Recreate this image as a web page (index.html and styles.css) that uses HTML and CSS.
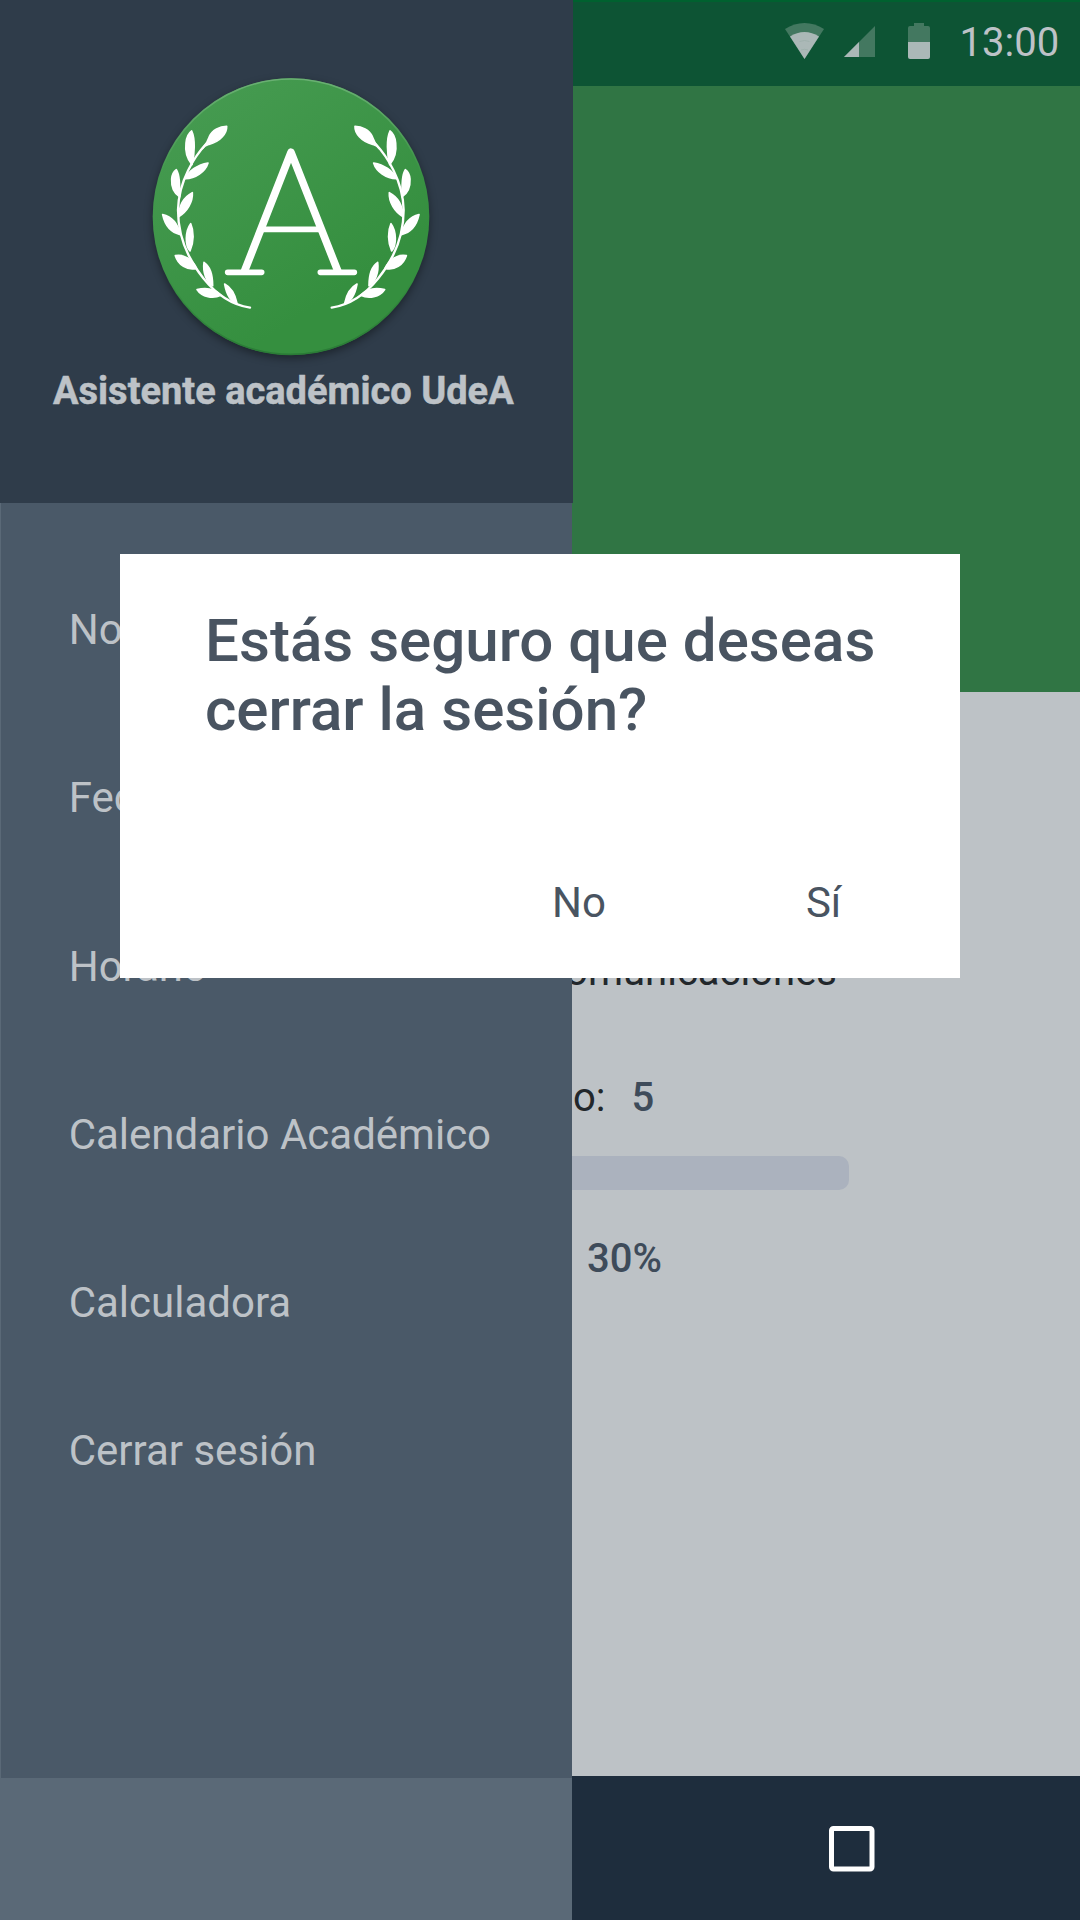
FILE: index.html
```html
<!DOCTYPE html>
<html lang="es">
<head>
<meta charset="utf-8">
<title>Asistente académico UdeA</title>
<link rel="stylesheet" href="styles.css">
</head>
<body>
<div class="screen">
  <aside class="drawer">
    <header class="drawer-head">
      <svg class="logo" viewBox="0 0 906 906">
        <defs>
          <linearGradient id="disc" x1="0.2" y1="0" x2="0.7" y2="0.75">
            <stop offset="0" stop-color="#469b51"/>
            <stop offset="1" stop-color="#358f3f"/>
          </linearGradient>
          <linearGradient id="rim" x1="0" y1="0" x2="0" y2="1">
            <stop offset="0" stop-color="#6ab073"/>
            <stop offset="0.35" stop-color="#6ab073" stop-opacity="0"/>
            <stop offset="0.7" stop-color="#2a7b36" stop-opacity="0"/>
            <stop offset="1" stop-color="#2a7b36"/>
          </linearGradient>
          <g id="branch" fill="#fff" stroke="#fff" stroke-width="5" stroke-linejoin="round">
            <path d="M200 220C165 258 116 330 114 420C114 510 150 575 190 625C230 675 275 705 330 713" fill="none" stroke-width="7" stroke-linecap="round"/>
            <path d="M260 169C261 189 242 214 207 223C198 226 191 230 187 236C200 222 204 212 208 200C217 179 240 170 260 169Z"/>
            <path d="M155 183C166 206 164 252 156 284C138 262 136 235 138 219C140 198 148 188 155 183Z"/>
            <path d="M204 279C196 305 166 326 136 326C146 302 173 284 204 279Z"/>
            <path d="M109 299C119 314 119 344 119 380C99 368 94 348 95 327C96 312 102 304 109 299Z"/>
            <path d="M157 368C159 396 141 425 116 440C117 407 132 381 157 368Z"/>
            <path d="M68 434C98 441 114 464 121 494C94 488 75 466 68 434Z"/>
            <path d="M152 461C162 483 162 516 150 543C135 527 135 484 152 461Z"/>
            <path d="M106 557C131 552 157 568 170 595C141 602 115 585 106 557Z"/>
            <path d="M192 577C212 590 218 619 218 647C199 636 188 607 192 577Z"/>
            <path d="M171 659C197 652 224 657 243 676C219 687 186 682 171 659Z"/>
            <path d="M254 642C275 653 286 676 291 700C270 693 259 670 254 642Z"/>
          </g>
        </defs>
        <circle class="logo-disc" cx="453" cy="440" r="415" fill="url(#disc)"/>
        <circle cx="453" cy="440" r="413" fill="none" stroke="url(#rim)" stroke-width="5"/>
        <use href="#branch"/>
        <use href="#branch" transform="translate(905 0) scale(-1 1)"/>
        <g fill="none" stroke="#fff" stroke-linecap="round" stroke-linejoin="round">
          <path d="M314 602L453 247L593 602" stroke-width="23"/>
          <path d="M366 478H540" stroke-width="17"/>
          <path d="M263 607H365M541 607H643" stroke-width="17"/>
        </g>
      </svg>
      <h1 class="app-name">Asistente académico UdeA</h1>
    </header>
    <nav class="menu">
      <a class="menu-item">Notas</a>
      <a class="menu-item">Fechas</a>
      <a class="menu-item">Horario</a>
      <a class="menu-item">Calendario Académico</a>
      <a class="menu-item">Calculadora</a>
      <a class="menu-item menu-item-last">Cerrar sesión</a>
    </nav>
    <div class="drawer-foot"></div>
  </aside>

  <main class="page">
    <div class="status">
      <svg class="wifi" width="39" height="36" viewBox="0 0 39 36">
        <path d="M0 6C12 -2 27 -2 39 6L19.500 36Z" fill="#437860"/>
        <path d="M5 13.500C14 7.500 25 7.500 34 13.500L19.500 36Z" fill="#abb8b7"/>
        <path d="M14.500 18.500Q19.500 16.500 24.500 18.500M16 27Q19.500 25.500 23 27" fill="none" stroke="#9cafa9" stroke-width="0.800"/>
      </svg>
      <svg class="signal" width="31" height="31" viewBox="0 0 31 31">
        <path d="M31 0V31H0Z" fill="#437860"/>
        <path d="M15 16V31H0Z" fill="#abb8b7"/>
      </svg>
      <svg class="battery" width="22" height="36" viewBox="0 0 22 36">
        <path d="M6 0H16V3H20Q22 3 22 5V19H0V5Q0 3 2 3H6Z" fill="#437860"/>
        <path d="M0 19H22V34Q22 36 20 36H2Q0 36 0 34Z" fill="#abb8b7"/>
      </svg>
      <span class="clock">13:00</span>
    </div>
    <div class="banner"></div>
    <section class="course">
      <div class="course-name">comunicaciones</div>
      <div class="grade"><span>o:</span><b class="value">5</b></div>
      <div class="track"></div>
      <b class="value percent">30%</b>
    </section>
    <div class="navbar">
      <svg width="46" height="46" viewBox="0 0 46 46"><rect x="2.500" y="2.500" width="40.500" height="40.500" rx="2" fill="none" stroke="#fff" stroke-width="5"/></svg>
    </div>
  </main>

  <div class="dialog">
    <h2 class="question">Estás seguro que deseas cerrar la sesión?</h2>
    <div class="actions">
      <span class="action">No</span>
      <span class="action">Sí</span>
    </div>
  </div>
</div>
</body>
</html>
```
FILE: styles.css
```css
* { box-sizing: border-box; }
body {
  margin: 0;
  font-family: Roboto, sans-serif;
  font-size: 42px;
}
.screen {
  position: relative;
  display: grid;
  grid-template-columns: 572px 508px;
  width: 1080px;
  height: 1920px;
  overflow: hidden;
}

/* Drawer */
.drawer {
  display: flex;
  flex-direction: column;
  height: 1920px;
  background: #5a6977;
  z-index: 1;
}
.drawer-head {
  width: 573px;
  height: 503px;
  flex: none;
  background: #2f3c4a;
  padding-top: 70px;
}
.logo {
  display: block;
  width: 302px;
  height: 302px;
  margin-left: 140px;
  overflow: visible;
}
.logo-disc { filter: drop-shadow(0 10px 12px rgba(0, 0, 0, .4)); }
.app-name {
  margin: -4px 0 0 53px;
  font-size: 38px;
  line-height: 46px;
  font-weight: 700;
  -webkit-text-stroke: .5px #bdc2c7;
  color: #bdc2c7;
  white-space: nowrap;
}
.menu {
  flex: none;
  height: 1275px;
  margin-left: 1px;
  padding: 43px 0 0 67.700px;
  background: #4a5968;
}
.menu-item {
  display: block;
  height: 168.300px;
  line-height: 168px;
  color: #bdc2c7;
}
.menu-item-last { margin-top: -20px; }
.drawer-foot { flex: 1; }

/* Page behind */
.page {
  display: flex;
  flex-direction: column;
  background: #bdc2c6;
  overflow: hidden;
}
.status {
  height: 86px;
  flex: none;
  display: flex;
  align-items: flex-start;
  background: #0d5434;
  border-top: 2px solid #00612f;
  padding: 21px 0 0 213px;
}
.signal { margin: 3px 0 0 20px; }
.battery { margin-left: 33px; }
.clock {
  margin: -3px 0 0 29.500px;
  font-size: 40px;
  line-height: 46px;
  color: #bdc2c7;
}
.banner { height: 606px; flex: none; background: #307544; }
.course {
  height: 1084px;
  flex: none;
  padding-top: 255px;
  color: #22272b;
}
.course-name {
  display: flex;
  justify-content: flex-end;
  width: 265px;
  overflow: hidden;
  font-size: 40px;
  line-height: 50px;
}
.grade {
  display: flex;
  margin-top: 76px;
  padding-left: 1px;
  font-size: 40px;
  line-height: 50px;
}
.grade .value { margin-left: 26px; }
.value { font-size: 40px; font-weight: 500; color: #3e4b5a; }
.track {
  width: 277px;
  height: 34px;
  margin-top: 33px;
  border-radius: 0 10px 10px 0;
  background: #abb2be;
}
.percent { display: block; margin: 44px 0 0 15px; line-height: 50px; }
.navbar {
  height: 144px;
  flex: none;
  background: #1e2d3d;
  padding: 50px 0 0 257px;
}

/* Dialog */
.dialog {
  position: absolute;
  z-index: 2;
  left: 120px;
  top: 554px;
  width: 840px;
  height: 424px;
  background: #fff;
  color: #495461;
  padding: 52px 75px 0 85px;
}
.question {
  margin: 0;
  font-size: 60.100px;
  line-height: 69px;
  font-weight: 500;
}
.actions {
  display: flex;
  gap: 200px;
  margin-top: 134px;
  padding-left: 347px;
  line-height: 50px;
}
```
